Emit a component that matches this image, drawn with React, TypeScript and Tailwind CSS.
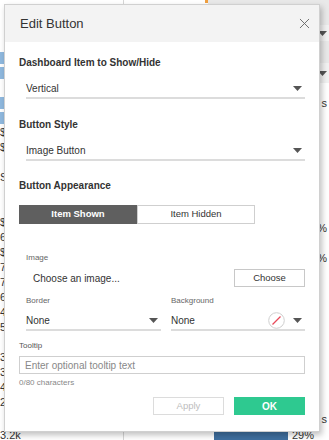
import { X } from "lucide-react";

const leftRows = [
  { blue: true, text: "" },
  { blue: true, text: "" },
  { blue: false, text: "" },
  { blue: true, text: "" },
  { blue: true, text: "" },
  { blue: false, text: "$" },
  { blue: false, text: "$" },
  { blue: false, text: "" },
  { blue: false, text: "S" },
  { blue: false, text: "" },
  { blue: false, text: "" },
  { blue: false, text: "$" },
  { blue: false, text: "6" },
  { blue: false, text: "$" },
  { blue: false, text: "7" },
  { blue: false, text: "7" },
  { blue: false, text: "6" },
  { blue: false, text: "4" },
  { blue: false, text: "5" },
  { blue: false, text: "" },
  { blue: false, text: "3." },
  { blue: false, text: "3." },
  { blue: false, text: "4." },
  { blue: false, text: "2." },
];

function Caret() {
  return (
    <svg width="9" height="5" viewBox="0 0 9 5" className="shrink-0">
      <path d="M0 0 L9 0 L4.5 5 Z" fill="#555" />
    </svg>
  );
}

function Dropdown({ value, className = "" }: { value: string; className?: string }) {
  return (
    <div className={`flex h-[19px] items-center justify-between border-b-2 border-[#dcdcdc] pr-[3px] ${className}`}>
      <span className="text-[10px] text-[#333]">{value}</span>
      <Caret />
    </div>
  );
}

function NoColor() {
  return (
    <svg width="17" height="17" viewBox="0 0 17 17">
      <circle cx="8.5" cy="8.5" r="7.8" fill="#fff" stroke="#cfcfcf" />
      <line x1="4.5" y1="12.5" x2="12.5" y2="4.5" stroke="#e8495a" strokeWidth="1.2" />
    </svg>
  );
}

export default function App() {
  return (
    <div
      className="relative h-[440px] w-[329px] overflow-hidden bg-white"
      style={{ fontFamily: '"Liberation Sans", Arial, sans-serif' }}
    >
      {/* dashboard behind the dialog */}
      <div className="flex h-full">
        <div className="flex w-[124px] shrink-0 flex-col border-r border-[#d6d6d6] pt-[50px]">
          {leftRows.map((r, i) => (
            <div key={i} className="flex h-[15px] items-center">
              {r.blue ? (
                <div className="h-[12px] w-[60px] bg-[#8fb8de]" />
              ) : (
                <span className="text-[11px] text-[#333]">{r.text}</span>
              )}
            </div>
          ))}
          <div className="mt-auto text-[11px] leading-[10px] text-[#333]">3.2k</div>
        </div>
        <div className="flex flex-1 flex-col">
          <div className="flex h-[25px]">
            <div className="relative w-[84px] bg-white">
              <div className="absolute right-0 top-0 h-[3px] w-[3px] bg-[#f0a040]" />
            </div>
            <div className="flex-1 bg-[#e9e9e9]" />
          </div>
          <div className="flex h-[16px] items-center justify-end bg-[#f2f2f2] pr-[2px]">
            <Caret />
          </div>
          <div className="h-[22px] bg-[#e9e9e9]" />
          <div className="flex h-[20px] items-center justify-end bg-[#f2f2f2] pr-[2px]">
            <Caret />
          </div>
          <div className="flex flex-1 flex-col items-end pr-[2px] pt-[12px] text-[11px] text-[#333]">
            <span>s</span>
            <span className="mt-[108px]">%</span>
            <span className="mt-[14px]">%</span>
            <span className="mt-[144px]">s</span>
          </div>
          <div className="flex h-[10px] items-start">
            <div className="ml-[90px] h-[10px] w-[74px] bg-[#3f6f9f]" />
            <span className="ml-[4px] text-[11px] leading-[10px] text-[#333]">29%</span>
          </div>
        </div>
      </div>

      {/* dialog */}
      <div className="absolute left-[4px] top-[4px] flex h-[428px] w-[316px] flex-col border border-[#d0d0d0] bg-white shadow-[2px_3px_6px_rgba(0,0,0,0.25)]">
        <div className="flex h-[37px] shrink-0 items-center justify-between bg-[#f3f3f3] pl-[15px] pr-[6px]">
          <span className="text-[13px] text-[#333]">Edit Button</span>
          <X className="h-[17px] w-[17px] text-[#666]" strokeWidth={1.3} />
        </div>

        <div className="flex flex-col px-[14px]">
          <div className="mt-[14px] text-[10px] font-bold leading-[14px] text-[#333]">Dashboard Item to Show/Hide</div>
          <Dropdown value="Vertical" className="ml-[7px] mt-[10px]" />

          <div className="mt-[19px] text-[10px] font-bold leading-[14px] text-[#333]">Button Style</div>
          <Dropdown value="Image Button" className="ml-[7px] mt-[10px]" />

          <div className="mt-[18px] text-[10px] font-bold leading-[14px] text-[#333]">Button Appearance</div>
          <div className="mt-[12px] flex h-[19px] w-[236px] text-[9.5px]">
            <div className="flex w-[118px] items-center justify-center bg-[#5f5f5f] font-bold text-white">Item Shown</div>
            <div className="flex flex-1 items-center justify-center border border-[#cfcfcf] text-[#333]">Item Hidden</div>
          </div>

          <div className="ml-[7px] mt-[28px] text-[8px] leading-[11px] text-[#666]">Image</div>
          <div className="ml-[7px] mt-[6px] flex h-[18px] items-center justify-between">
            <span className="pl-[7px] text-[10px] text-[#333]">Choose an image...</span>
            <div className="flex h-[18px] w-[71px] items-center justify-center border border-[#c8c8c8] text-[9.5px] text-[#333]">
              Choose
            </div>
          </div>

          <div className="ml-[7px] mt-[8px] flex gap-[10px]">
            <div className="flex w-[135px] flex-col">
              <span className="text-[8px] leading-[11px] text-[#666]">Border</span>
              <div className="mt-[6px] flex h-[19px] items-center justify-between border-b-2 border-[#dcdcdc] pr-[3px]">
                <span className="text-[10px] text-[#333]">None</span>
                <Caret />
              </div>
            </div>
            <div className="flex flex-1 flex-col">
              <span className="text-[8px] leading-[11px] text-[#666]">Background</span>
              <div className="mt-[6px] flex h-[19px] items-center justify-between border-b-2 border-[#dcdcdc] pr-[3px]">
                <span className="text-[10px] text-[#333]">None</span>
                <div className="flex items-center gap-[8px]">
                  <NoColor />
                  <Caret />
                </div>
              </div>
            </div>
          </div>

          <div className="mt-[9px] text-[8px] leading-[11px] text-[#555]">Tooltip</div>
          <div className="mt-[5px] flex h-[18px] items-center border border-[#cfcfcf] px-[5px] text-[10px] text-[#888]">
            Enter optional tooltip text
          </div>
          <div className="mt-[4px] text-[8px] leading-[10px] text-[#888]">0/80 characters</div>

          <div className="mt-[9px] flex justify-end gap-[10px]">
            <div className="flex h-[18px] w-[71px] items-center justify-center border border-[#dcdcdc] text-[9.5px] text-[#bdbdbd]">
              Apply
            </div>
            <div className="flex h-[18px] w-[71px] items-center justify-center bg-[#2ec990] text-[10px] font-bold text-white">
              OK
            </div>
          </div>
        </div>
      </div>
    </div>
  );
}
